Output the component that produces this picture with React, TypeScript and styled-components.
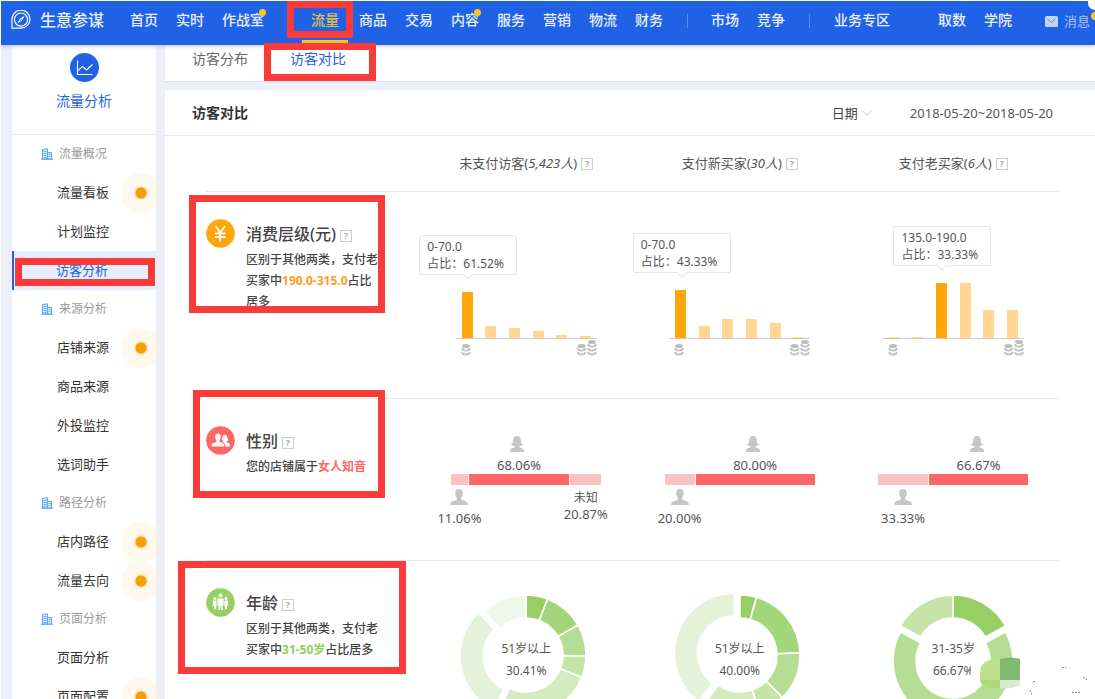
import React from 'react';
import styled, { createGlobalStyle, css } from 'styled-components';

const BLUE = '#2062e6';
const RED = '#fb3a3a';

const GlobalStyle = createGlobalStyle`
  * { box-sizing: border-box; }
  body {
    margin: 0;
    background: #eceff7;
    color: #555;
    font-family: "Noto Sans", "Noto Sans CJK SC", sans-serif;
    font-size: 13px;
    line-height: 18px;
  }
  a { color: inherit; text-decoration: none; }
  ul { list-style: none; margin: 0; padding: 0; }
  h1, h2, h3, p { margin: 0; }
`;

const Page = styled.div`
  display: flex;
  flex-direction: column;
  height: 100vh;
  overflow: hidden;
  border-top: 1px solid #fff;
  border-left: 1px solid #fff;
`;

/* Red frame drawn over the parts that a reader should notice. */
const Callout = styled.span<{ $left: number; $top: number; $w: number; $h: number }>`
  position: absolute;
  z-index: 5;
  left: ${p => p.$left}px;
  top: ${p => p.$top}px;
  width: ${p => p.$w}px;
  height: ${p => p.$h}px;
  border: 7px solid ${RED};
  pointer-events: none;
`;

/* ---------- top bar ---------- */

const TopBar = styled.header`
  position: relative;
  z-index: 2;
  flex: none;
  display: flex;
  align-items: flex-start;
  height: 44px;
  padding: 0 5px 0 10px;
  background: ${BLUE};
  color: #e9f0ff;
  box-shadow: 0 1px 4px rgba(60, 90, 160, 0.35);
  white-space: nowrap;
`;

const Brand = styled.a`
  display: flex;
  align-items: center;
  gap: 9px;
  width: 110px;
  height: 38px;
  font-size: 16px;
  font-weight: 500;
`;

const Nav = styled.nav`
  display: flex;
`;

const NavGroup = styled.ul<{ $before?: number }>`
  display: flex;
  margin-left: ${p => p.$before ?? 0}px;
`;

const NavItem = styled.li<{ $active?: boolean }>`
  position: relative;
  padding: 0 9px;
  font-size: 14px;
  font-weight: 500;
  line-height: 38px;
  ${p =>
    p.$active &&
    css`
      margin-right: 2px;
      color: #e3c33c;
      &::after {
        content: '';
        position: absolute;
        left: 0;
        right: 0;
        top: 39px;
        height: 3px;
        background: #f7c423;
      }
    `}
`;

const NavDot = styled.i`
  position: absolute;
  right: 7px;
  top: 8px;
  width: 7px;
  height: 7px;
  border-radius: 50%;
  background: #f9c81f;
`;

const NavDivider = styled.span<{ $after: number }>`
  width: 1px;
  height: 14px;
  margin: 13px ${p => p.$after}px 0 15px;
  background: #5d8df0;
`;

const Message = styled.a`
  display: flex;
  align-items: center;
  gap: 6px;
  height: 40px;
  margin-left: auto;
  color: #a9c3f8;
`;

const CornerBadge = styled.i<{ $color: string; $top: number; $size: number }>`
  position: absolute;
  right: -${p => p.$size / 2}px;
  top: ${p => p.$top}px;
  width: ${p => p.$size}px;
  height: ${p => p.$size}px;
  border-radius: 50%;
  background: ${p => p.$color};
`;

/* ---------- frame ---------- */

const Body = styled.div`
  flex: 1;
  min-height: 0;
  display: flex;
  gap: 9px;
  padding-left: 11px;
`;

const Sidebar = styled.aside`
  flex: none;
  width: 144px;
  background: #fff;
`;

const SideHead = styled.div`
  display: flex;
  flex-direction: column;
  align-items: center;
  gap: 9px;
  height: 90px;
  padding-top: 8px;
  border-bottom: 1px solid #e6e9ef;
  color: ${BLUE};
  font-size: 14px;
  line-height: 20px;
`;

const SideGroup = styled.h3`
  display: flex;
  align-items: center;
  gap: 6px;
  height: 38px;
  padding-left: 29px;
  color: #999;
  font-size: 12px;
  font-weight: 400;
`;

const SideItem = styled.li<{ $active?: boolean }>`
  position: relative;
  height: 39px;
  padding-left: 45px;
  line-height: 38px;
  color: #333;
  ${p =>
    p.$active &&
    css`
      padding-left: 42px;
      border-left: 2px solid ${BLUE};
      background: #e6eefc;
      color: ${BLUE};
    `}
`;

const HintDot = styled.i`
  position: absolute;
  z-index: 1;
  right: -5px;
  top: 0;
  width: 40px;
  height: 40px;
  border-radius: 50%;
  background: radial-gradient(circle, #f2a007 5px, #fbe3b8 6px, rgba(251, 240, 218, 0.5) 8px, rgba(251, 240, 218, 0.4) 20px);
`;

const Main = styled.main`
  flex: 1;
  min-width: 0;
  display: flex;
  flex-direction: column;
  gap: 9px;
`;

const Tabs = styled.nav`
  position: relative;
  z-index: 3;
  flex: none;
  display: flex;
  gap: 42px;
  height: 36px;
  padding-left: 27px;
  font-size: 14px;
  line-height: 28px;
`;

const TabsBack = styled.div`
  flex: none;
  background: #fff;
  box-shadow: 0 1px 1px #dde2ec;
`;

const Tab = styled.a<{ $active?: boolean }>`
  position: relative;
  color: ${p => (p.$active ? BLUE : '#666')};
`;

const Panel = styled.section`
  flex: 1;
  min-height: 0;
  background: #fff;
`;

const PanelHead = styled.div`
  display: flex;
  align-items: center;
  height: 46px;
  padding: 0 42px 0 27px;
  border-bottom: 1px solid #e9ebef;
`;

const PanelTitle = styled.h1`
  flex: 1;
  color: #333;
  font-size: 14px;
  font-weight: 700;
  line-height: 20px;
`;

const DateSelect = styled.label`
  display: flex;
  align-items: center;
  width: 40px;
  margin-right: 38px;
  select {
    width: 30px;
    padding: 0;
    border: 0;
    background: none;
    appearance: none;
    color: #444;
    font: inherit;
  }
`;

/* ---------- comparison table ---------- */

const TableWrap = styled.div`
  padding: 0 35px 0 41px;
`;

const Table = styled.table`
  width: 100%;
  table-layout: fixed;
  border-spacing: 0;
`;

const HeadCell = styled.th`
  height: 56px;
  padding: 0 0 2px;
  border-bottom: 1px solid #e8e8e8;
  font-weight: 400;
  white-space: nowrap;
`;

const cell = css<{ $h: number }>`
  position: relative;
  height: ${p => p.$h}px;
  padding: 0;
  border-bottom: 1px solid #e8e8e8;
  vertical-align: top;
  font-weight: 400;
  text-align: left;
`;
const LabelCell = styled.th<{ $h: number }>`${cell}`;
const Cell = styled.td<{ $h: number }>`${cell}`;

const Help = styled.button`
  width: 12px;
  height: 12px;
  margin-left: 4px;
  padding: 0;
  border: 1px solid #ccc;
  background: #fff;
  color: #aaa;
  font: 700 9px/10px "Noto Sans", sans-serif;
  vertical-align: 1px;
`;

const Label = styled.div`
  display: flex;
  gap: 11px;
  padding-top: 27px;
  svg { flex: none; }
`;

const LabelTitle = styled.h2`
  color: #444;
  font-size: 16px;
  font-weight: 500;
  line-height: 30px;
  white-space: nowrap;
`;

const LabelText = styled.p`
  width: 134px;
  color: #444;
  font-size: 12px;
  font-weight: 500;
  line-height: 21px;
`;

const Mark = styled.strong<{ $color: string }>`
  color: ${p => p.$color};
  font-weight: 700;
`;

const BarChart = styled.div`
  width: 141px;
  margin: 0 auto;
`;

const Plot = styled.div`
  display: flex;
  align-items: flex-end;
  justify-content: space-between;
  height: 147px;
  padding: 0 6px;
  border-bottom: 1px solid #ccc;
`;

const Bar = styled.div<{ $active?: boolean }>`
  position: relative;
  width: 11px;
  background: ${p => (p.$active ? '#ffa60d' : '#ffd692')};
`;

const Tip = styled.div`
  position: absolute;
  left: 50%;
  bottom: calc(100% + 17px);
  width: 98px;
  margin-left: -48px;
  padding: 2px 7px;
  border: 1px solid #e6e6e6;
  border-radius: 2px;
  background: #fff;
  font-size: 12px;
  line-height: 17px;
  white-space: nowrap;
  &::after {
    content: '';
    position: absolute;
    left: 44px;
    bottom: -4px;
    width: 7px;
    height: 7px;
    border: solid #e6e6e6;
    border-width: 0 1px 1px 0;
    background: #fff;
    transform: rotate(45deg);
  }
`;

const Coins = styled.div`
  display: flex;
  justify-content: space-between;
  padding: 1px 0 0 5px;
`;

const Split = styled.div`
  display: flex;
  gap: 1px;
  width: 150px;
  margin: 0 auto;
  padding-top: 37px;
`;

const SplitPart = styled.div`
  display: flex;
  flex-direction: column;
  align-items: center;
  min-width: 0;
  white-space: nowrap;
`;

const SplitTop = styled.div`
  display: flex;
  flex-direction: column;
  align-items: center;
  gap: 4px;
  height: 38px;
  svg { margin-right: 4px; }
`;

const SplitBar = styled.div<{ $strong?: boolean }>`
  width: 100%;
  height: 11px;
  background: ${p => (p.$strong ? '#ff6666' : '#ffc2c2')};
`;

const SplitBottom = styled.div`
  display: flex;
  flex-direction: column;
  align-items: center;
  gap: 4px;
  padding-top: 4px;
`;

const Unknown = styled.div`
  text-align: center;
  line-height: 17px;
  small { display: block; font-size: 12px; }
`;

const DonutBox = styled.div`
  position: relative;
  width: 140px;
  margin: 0 auto;
  padding-top: 24px;
  svg { display: block; }
`;

const DonutText = styled.div`
  position: absolute;
  left: 0;
  right: 0;
  top: 77px;
  text-align: center;
  font-size: 12px;
  line-height: 22px;
`;

const Stamp = styled.svg`
  position: absolute;
  left: 124px;
  top: 94px;
`;

/* ---------- drawings ---------- */

const Logo = () => (
  <svg width="20" height="20" viewBox="0 0 20 20" fill="none" stroke="#fff">
    <path d="M1 18.2V10a9 9 0 1 1 9 8.2Z" strokeWidth="1.2" />
    <circle cx="10" cy="9.6" r="6.6" strokeWidth="1.2" />
    <path d="M13.8 5.8 10.9 10.6 6.2 13.6 9.1 8.6Z" fill="#fff" stroke="none" />
    <path d="M8.8 11 11.2 8.6" stroke={BLUE} strokeWidth="0.8" />
  </svg>
);

const Mail = () => (
  <svg width="13" height="11" viewBox="0 0 13 11">
    <rect width="13" height="11" rx="1.5" fill="#c3d4fa" />
    <path d="M2.5 3 6.5 6.500 10.500 3" fill="none" stroke="#5d86e8" />
  </svg>
);

const TrafficIcon = () => (
  <svg width="29" height="29" viewBox="0 0 29 29">
    <circle cx="14.5" cy="14.5" r="14.5" fill={BLUE} />
    <path d="M7.5 7.5v14h15M8 17.5l4.5-4 4 3.5 6-5.5" fill="none" stroke="#fff" strokeWidth="1.1" />
  </svg>
);

const Building = () => (
  <svg width="12" height="12" viewBox="0 0 12 12" fill="#d9ebfd" stroke="#5aa7f8">
    <path d="M1.500 11V1.500L6.500.8V11ZM6.500 4.500h4V11h-4ZM0 11.300h12" />
    <path d="M2.500 3.500h3M2.500 5.500h3M2.500 7.500h3M2.500 9.500h3M7.500 6.500h2M7.500 8.500h2" strokeWidth=".9" />
  </svg>
);

const Chevron = () => (
  <svg width="10" height="6" viewBox="0 0 10 6" fill="none" stroke="#ccc">
    <path d="M.5.8 5 5 9.5.8" />
  </svg>
);

const YuanIcon = () => (
  <svg width="29" height="29" viewBox="0 0 29 29">
    <circle cx="14.5" cy="14.5" r="14.3" fill="#ffa60d" />
    <path d="M9.5 7 14.2 13.5 19 7M14.2 13.5V22.5M9 14.3h10.5M9 18h10.5" fill="none" stroke="#fff" strokeWidth="1.8" />
  </svg>
);

const PeopleIcon = () => (
  <svg width="29" height="29" viewBox="0 0 29 29" fill="#fff">
    <circle cx="14.5" cy="14.5" r="14.3" fill="#ff6666" />
    <path d="M9.2 10.5C9.2 8.6 10.3 7.6 12 7.6s2.8 1 2.8 2.9c0 1.7-.4 2.8-1.2 3.8v1.4l3.6 1.7c.8.4 1 1.300 1 3.100H5.600c0-1.800.2-2.700 1-3.100l3.800-1.700v-1.400c-.8-1-1.200-2.100-1.200-3.800Z" />
    <path d="M16.300 11.500c0-1.600 1-2.700 2.500-2.700s2.500 1.100 2.500 2.700l1 3-1.900.6v.9l2.600 1.300c.7.4.9 1.200.9 3.200h-4.700c0-2.700-.5-3.500-2.900-4.600l1.100-.8v-.6l-1.900-.5Z" />
  </svg>
);

const AgeIcon = () => (
  <svg width="29" height="29" viewBox="0 0 29 29" fill="#fff">
    <circle cx="14.500" cy="14.500" r="14.300" fill="#96cf64" />
    <circle cx="14.500" cy="7.500" r="2" />
    <path d="M11.500 10.500h6v7h-.9V22h-1.700v-4h-.8v4h-1.700v-4.500h-.9Z" />
    <circle cx="9" cy="10.400" r="1.500" />
    <circle cx="20" cy="10.400" r="1.500" />
    <path d="M6.900 12.600h3.700v5.700h-.4v2.900H8v-3.500H6.900ZM22.100 12.600h-3.700v5.700h.4v2.900H21v-3.500h1.100Z" />
  </svg>
);

const Female = () => (
  <svg width="14" height="16" viewBox="0 0 14 16" fill="#c6c6c6">
    <path d="M7 0c2.600 0 3.800 1.800 3.800 4.300 0 1.800.6 3.200 2.200 4.200-.8 1.200-2 1.600-3.600 1.400v1.300l3.200 1.400c1.100.500 1.400 1.500 1.400 3.400H0c0-1.900.3-2.900 1.400-3.400l3.200-1.400V9.900C3 10.100 1.800 9.700 1 8.500c1.600-1 2.200-2.400 2.200-4.200C3.200 1.800 4.400 0 7 0Z" />
  </svg>
);

const Male = () => (
  <svg width="18" height="16" viewBox="0 0 18 16" fill="#c6c6c6">
    <path d="M9 0c2.600 0 3.800 1.600 3.800 4 0 2.100-.7 3.700-1.700 4.800v1.800l5 2c1.300.600 1.600 1.600 1.600 3.400H.3c0-1.800.3-2.800 1.600-3.400l5-2V8.800C5.900 7.700 5.200 6.100 5.200 4c0-2.400 1.200-4 3.800-4Z" />
  </svg>
);

const CoinPile = ({ x, top, n }: { x: number; top: number; n: number }) => (
  <>
    <ellipse cx={x} cy={top + 2} rx="4" ry="2" fill="#bdbdbd" />
    {Array.from({ length: n }, (_, i) => (
      <path
        key={i}
        d={`M${x - 4} ${top + 4 + i * 4}c.5 3.400 7.500 3.400 8 0`}
        fill="none"
        stroke="#c2c2c2"
        strokeWidth="1.800"
      />
    ))}
  </>
);

type Slice = { from: number; to: number; color: string; out?: boolean };

const point = (r: number, deg: number) => {
  const a = (deg * Math.PI) / 180;
  return `${(r * Math.sin(a)).toFixed(2)} ${(-r * Math.cos(a)).toFixed(2)}`;
};

const Donut = ({ slices }: { slices: Slice[] }) => (
  <svg width="140" height="140" viewBox="-70 -70 140 140">
    {slices.map(({ from, to, color, out }) => {
      const big = to - from > 180 ? 1 : 0;
      const mid = (((from + to) / 2) * Math.PI) / 180;
      const shift = out ? `translate(${(6 * Math.sin(mid)).toFixed(2)} ${(-6 * Math.cos(mid)).toFixed(2)})` : undefined;
      return (
        <path
          key={from}
          transform={shift}
          d={`M${point(60, from)}A60 60 0 ${big} 1 ${point(60, to)}L${point(37, to)}A37 37 0 ${big} 0 ${point(37, from)}Z`}
          fill={color}
          stroke="#fff"
          strokeWidth="1.600"
        />
      );
    })}
  </svg>
);

/* ---------- data ---------- */

type Entry = { text: string; dot?: boolean; active?: boolean };

const sideMenu: { title: string; items: Entry[] }[] = [
  { title: '流量概况', items: [{ text: '流量看板', dot: true }, { text: '计划监控' }, { text: '访客分析', active: true }] },
  { title: '来源分析', items: [{ text: '店铺来源', dot: true }, { text: '商品来源' }, { text: '外投监控' }, { text: '选词助手' }] },
  { title: '路径分析', items: [{ text: '店内路径', dot: true }, { text: '流量去向', dot: true }] },
  { title: '页面分析', items: [{ text: '页面分析' }, { text: '页面配置', dot: true }] },
];

const visitors = [
  { name: '未支付访客', count: '5,423' },
  { name: '支付新买家', count: '30' },
  { name: '支付老买家', count: '6' },
];

const spending = [
  { bars: [46, 12, 10, 7, 3, 2], active: 0, range: '0-70.0', share: '61.52%' },
  { bars: [48, 12, 19, 19, 15, 1], active: 0, range: '0-70.0', share: '43.33%' },
  { bars: [1, 1, 55, 55, 28, 28], active: 2, range: '135.0-190.0', share: '33.33%' },
];

const genders = [
  { male: '11.06', female: '68.06', unknown: '20.87' },
  { male: '20.00', female: '80.00' },
  { male: '33.33', female: '66.67' },
];

const ages: { name: string; share: string; slices: Slice[] }[] = [
  {
    name: '51岁以上',
    share: '30.41%',
    slices: [
      { from: 0, to: 21, color: '#97cf65' },
      { from: 21, to: 60, color: '#a3d67a' },
      { from: 60, to: 91, color: '#b5de94' },
      { from: 91, to: 112, color: '#c4e5a8' },
      { from: 112, to: 206, color: '#d3ebbf' },
      { from: 206, to: 316, color: '#e3f2d8', out: true },
      { from: 316, to: 360, color: '#f0f7ea' },
    ],
  },
  {
    name: '51岁以上',
    share: '40.00%',
    slices: [
      { from: 0, to: 16, color: '#97cf65' },
      { from: 16, to: 88, color: '#a3d67a' },
      { from: 88, to: 135, color: '#b5de94' },
      { from: 135, to: 161, color: '#c4e5a8' },
      { from: 161, to: 216, color: '#d3ebbf' },
      { from: 216, to: 360, color: '#e3f2d8', out: true },
    ],
  },
  {
    name: '31-35岁',
    share: '66.67%',
    slices: [
      { from: 0, to: 61, color: '#97cf65' },
      { from: 61, to: 299, color: '#b5de94', out: true },
      { from: 299, to: 360, color: '#c6e4a8' },
    ],
  },
];

const NavLinks = ({ items, before }: { items: Entry[]; before?: number }) => (
  <NavGroup $before={before}>
    {items.map(it => (
      <NavItem key={it.text} $active={it.active}>
        <a href="#">{it.text}</a>
        {it.dot && <NavDot />}
        {it.active && <Callout $left={-15} $top={0} $w={66} $h={37} />}
      </NavItem>
    ))}
  </NavGroup>
);

const entries = (...names: string[]): Entry[] => names.map(text => ({ text }));

export default function App() {
  return (
    <Page>
      <GlobalStyle />
      <TopBar>
        <Brand href="#">
          <Logo />
          生意参谋
        </Brand>
        <Nav>
          <NavLinks items={[...entries('首页', '实时'), { text: '作战室', dot: true }]} />
          <NavLinks
            before={29}
            items={[
              { text: '流量', active: true },
              ...entries('商品', '交易'),
              { text: '内容', dot: true },
              ...entries('服务', '营销', '物流', '财务'),
            ]}
          />
          <NavDivider $after={14} />
          <NavLinks items={entries('市场', '竞争')} />
          <NavDivider $after={15} />
          <NavLinks items={entries('业务专区')} />
          <NavLinks before={30} items={entries('取数', '学院')} />
        </Nav>
        <Message href="#">
          <Mail />
          消息
        </Message>
        <CornerBadge $color="#fff" $top={-5} $size={14} />
        <CornerBadge $color="#f9c81f" $top={11} $size={8} />
      </TopBar>

      <Body>
        <Sidebar>
          <SideHead>
            <TrafficIcon />
            流量分析
          </SideHead>
          {sideMenu.map(group => (
            <div key={group.title}>
              <SideGroup>
                <Building />
                {group.title}
              </SideGroup>
              <ul>
                {group.items.map(it => (
                  <SideItem key={it.text} $active={it.active}>
                    <a href="#">{it.text}</a>
                    {it.dot && <HintDot />}
                    {it.active && <Callout $left={1} $top={7} $w={140} $h={28} />}
                  </SideItem>
                ))}
              </ul>
            </div>
          ))}
        </Sidebar>

        <Main>
          <TabsBack>
            <Tabs>
              <Tab href="#">访客分布</Tab>
              <Tab href="#" $active>
                访客对比
                <Callout $left={-26} $top={-2} $w={112} $h={38} />
              </Tab>
            </Tabs>
          </TabsBack>

          <Panel>
            <PanelHead>
              <PanelTitle>访客对比</PanelTitle>
              <DateSelect>
                <select aria-label="日期">
                  <option>日期</option>
                </select>
                <Chevron />
              </DateSelect>
              <span>2018-05-20~2018-05-20</span>
            </PanelHead>

            <TableWrap>
              <Table>
                <thead>
                  <tr>
                    <HeadCell as="td" />
                    {visitors.map(v => (
                      <HeadCell key={v.name} scope="col">
                        {v.name}(<em>{v.count}人</em>)<Help>?</Help>
                      </HeadCell>
                    ))}
                  </tr>
                </thead>
                <tbody>
                  <tr>
                    <LabelCell scope="row" $h={207}>
                      <Label>
                        <YuanIcon />
                        <div>
                          <LabelTitle>
                            消费层级(元)<Help>?</Help>
                          </LabelTitle>
                          <LabelText>
                            区别于其他两类，支付老买家中<Mark $color="#ff9c1a">190.0-315.0</Mark>占比居多
                          </LabelText>
                        </div>
                      </Label>
                      <Callout $left={-17} $top={3} $w={196} $h={118} />
                    </LabelCell>
                    {spending.map((s, i) => (
                      <Cell key={i} $h={207}>
                        <BarChart>
                          <Plot>
                            {s.bars.map((h, j) => (
                              <Bar key={j} $active={j === s.active} style={{ height: h }}>
                                {j === s.active && (
                                  <Tip>
                                    {s.range}
                                    <br />
                                    占比：{s.share}
                                  </Tip>
                                )}
                              </Bar>
                            ))}
                          </Plot>
                          <Coins>
                            <svg width="10" height="17" viewBox="0 0 10 17">
                              <CoinPile x={5} top={4} n={2} />
                            </svg>
                            <svg width="20" height="17" viewBox="0 0 20 17">
                              <CoinPile x={4.5} top={4} n={2} />
                              <CoinPile x={15} top={0} n={3} />
                            </svg>
                          </Coins>
                        </BarChart>
                      </Cell>
                    ))}
                  </tr>
                  <tr>
                    <LabelCell scope="row" $h={162}>
                      <Label>
                        <PeopleIcon />
                        <div>
                          <LabelTitle>
                            性别<Help>?</Help>
                          </LabelTitle>
                          <LabelText>
                            您的店铺属于<Mark $color="#ff6666">女人知音</Mark>
                          </LabelText>
                        </div>
                      </Label>
                      <Callout $left={-13} $top={-9} $w={192} $h={108} />
                    </LabelCell>
                    {genders.map((g, i) => (
                      <Cell key={i} $h={162}>
                        <Split>
                          <SplitPart style={{ flex: `${g.male} 0 0` }}>
                            <SplitTop />
                            <SplitBar />
                            <SplitBottom>
                              <Male />
                              <span>{g.male}%</span>
                            </SplitBottom>
                          </SplitPart>
                          <SplitPart style={{ flex: `${g.female} 0 0` }}>
                            <SplitTop>
                              <Female />
                              <span>{g.female}%</span>
                            </SplitTop>
                            <SplitBar $strong />
                          </SplitPart>
                          {g.unknown && (
                            <SplitPart style={{ flex: `${g.unknown} 0 0` }}>
                              <SplitTop />
                              <SplitBar />
                              <SplitBottom>
                                <Unknown>
                                  <small>未知</small>
                                  {g.unknown}%
                                </Unknown>
                              </SplitBottom>
                            </SplitPart>
                          )}
                        </Split>
                      </Cell>
                    ))}
                  </tr>
                  <tr>
                    <LabelCell scope="row" $h={207}>
                      <Label>
                        <AgeIcon />
                        <div>
                          <LabelTitle>
                            年龄<Help>?</Help>
                          </LabelTitle>
                          <LabelText>
                            区别于其他两类，支付老买家中<Mark $color="#8fce55">31-50岁</Mark>占比居多
                          </LabelText>
                        </div>
                      </Label>
                      <Callout $left={-28} $top={0} $w={228} $h={113} />
                    </LabelCell>
                    {ages.map((a, i) => (
                      <Cell key={i} $h={207}>
                        <DonutBox>
                          <Donut slices={a.slices} />
                          <DonutText>
                            {a.name}
                            <br />
                            {a.share}
                          </DonutText>
                        </DonutBox>
                        {i === 2 && (
                          <Stamp width="118" height="46" viewBox="0 0 118 46">
                            <path d="M0 6h10v14H0Z" fill="#fff" />
                            <path d="M29 5H18q-9 3-9 13v8h20Z" fill="#bfe08c" />
                            <path d="M9 25h20v8H20q-9 0-11-8Z" fill="#add87c" />
                            <path d="M29 4q10-3 20 0v21H29Z" fill="#82b870" />
                            <path d="M29 25h20v5q-8 5-20 3Z" fill="#d7ebd0" />
                            <path
                              d="M91 12.500h4M112 22.500l4 2M62 26.500h3M59 35l2 5M101 37.500h8"
                              fill="none"
                              stroke="#8a8a8a"
                              strokeDasharray="2 1"
                            />
                          </Stamp>
                        )}
                      </Cell>
                    ))}
                  </tr>
                </tbody>
              </Table>
            </TableWrap>
          </Panel>
        </Main>
      </Body>
    </Page>
  );
}
